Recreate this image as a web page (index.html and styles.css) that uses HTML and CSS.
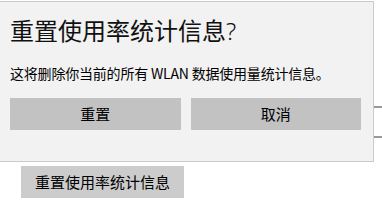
FILE: index.html
```html
<!DOCTYPE html>
<html lang="zh-CN">
<head>
<meta charset="utf-8">
<title>重置使用率统计信息</title>
<link rel="stylesheet" href="styles.css">
</head>
<body>
<main class="page">
  <div class="rows">
    <div class="row"></div>
    <div class="row"></div>
  </div>
  <button class="btn page-btn" type="button">重置使用率统计信息</button>
</main>
<section class="flyout" role="dialog" aria-label="重置使用率统计信息?">
  <h1 class="flyout-title">重置使用率统计信息<span class="q">?</span></h1>
  <p class="flyout-text">这将删除你当前的所有 WLAN 数据使用量统计信息。</p>
  <div class="flyout-actions">
    <button class="btn dlg-btn" type="button">重置</button>
    <button class="btn dlg-btn" type="button">取消</button>
  </div>
</section>
</body>
</html>
```
FILE: styles.css
```css
* { box-sizing: border-box; }
html, body { margin: 0; padding: 0; }
body {
  width: 382px;
  height: 206px;
  overflow: hidden;
  background: #ffffff;
  font-family: "Noto Sans CJK SC", "Noto Sans", sans-serif;
  color: #000;
  position: relative;
}
.page {
  padding-top: 106px;
}
.row {
  height: 30px;
  border-top: 2px solid #999999;
}
.btn {
  font-family: inherit;
  border: none;
  color: #000;
  font-size: 15px;
  line-height: 20px;
  padding: 0;
  cursor: default;
}
.page-btn {
  display: block;
  margin-left: 21px;
  width: 163px;
  height: 32px;
  background: #cccccc;
}
.flyout {
  position: absolute;
  left: -2px;
  top: 1px;
  width: 376px;
  height: 161px;
  background: #f2f2f2;
  border: 1px solid #cbcbcb;
  padding: 12px 12px 0 11px;
}
.flyout-title {
  margin: 0;
  font-size: 24px;
  line-height: 32px;
  font-weight: 400;
  color: #111;
}
.flyout-title .q { font-family: "Noto Sans", sans-serif; font-weight: 300; }
.flyout-text {
  margin: 16px 0 0;
  font-size: 14px;
  line-height: 20px;
  letter-spacing: -0.2px;
}
.flyout-actions {
  margin-top: 15px;
  display: flex;
  gap: 10px;
}
.dlg-btn {
  flex: 1;
  height: 32px;
  background: #c2c2c2;
}
```
